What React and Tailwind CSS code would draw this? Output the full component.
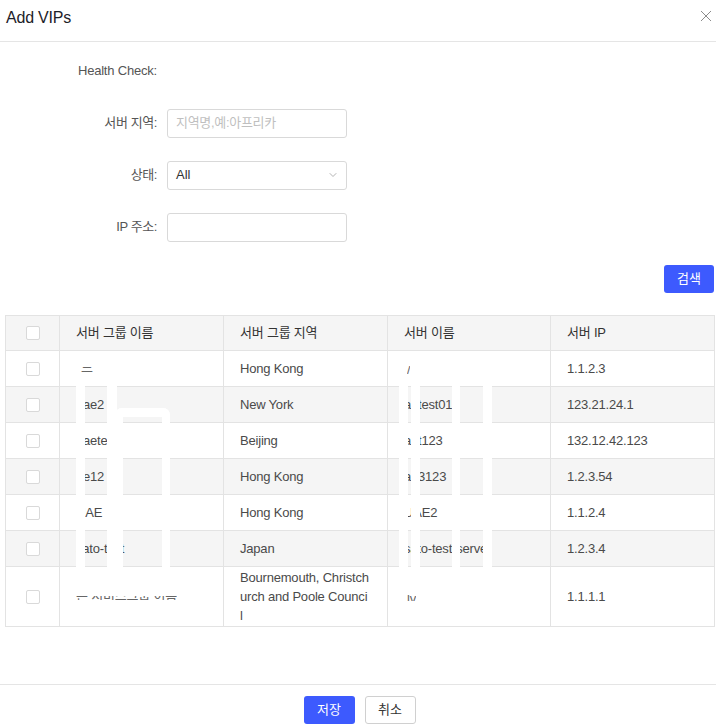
import { ChevronDown } from 'lucide-react';

const rows = [
  { name: null, region: 'Hong Kong', server: null, ip: '1.1.2.3' },
  { name: 'uae2', region: 'New York', server: 'aetest01', ip: '123.21.24.1' },
  { name: 'uaete', region: 'Beijing', server: 'aet123', ip: '132.12.42.123' },
  { name: 'ue12', region: 'Hong Kong', server: 'ae3123', ip: '1.2.3.54' },
  { name: 'UAE', region: 'Hong Kong', server: 'UAE2', ip: '1.1.2.4' },
  { name: 'sato-test', region: 'Japan', server: 'sato-test-server', ip: '1.2.3.4' },
  {
    name: null,
    // wrapped at the character like the cell in the reference
    region: ['Bournemouth, Christch', 'urch and Poole Counci', 'l'],
    server: null,
    ip: '1.1.1.1',
  },
];

// faded fragments, only the bottom strokes of the glyphs show
function Clipped({ text, h = 5, shift = 9 }) {
  return (
    <span className="inline-block overflow-hidden align-middle text-[#666]" style={{ height: h }}>
      <span className="block leading-[19px]" style={{ marginTop: -shift }}>{text}</span>
    </span>
  );
}

function Checkbox() {
  return <div className="mx-auto w-[14px] h-[14px] rounded-[2px] border border-[#d9d9d9] bg-white" />;
}

export default function App() {
  return (
    <div className="h-[727px] w-[716px] bg-white flex flex-col overflow-hidden font-['Liberation_Sans','Noto_Sans_CJK_KR',sans-serif] text-[13px] text-[#333]">
      {/* Header */}
      <div className="h-[42px] shrink-0 flex items-center justify-between pl-[6px] pr-[3px] border-b border-[#e5e5e5]">
        <div className="text-[16px] text-[#1d2129] -mt-[5px] tracking-[-0.2px]">Add VIPs</div>
        <svg width="12" height="12" viewBox="0 0 12 12" className="-mt-[9px] mr-[1px]">
          <path d="M1 1L11 11M11 1L1 11" stroke="#8c8c8c" strokeWidth="1" />
        </svg>
      </div>

      {/* Body */}
      <div className="flex-1 pt-[15px]">
        <div className="flex flex-col gap-[24px] text-[#555]">
          <div className="flex items-center h-[28px]">
            <div className="w-[157px] text-right tracking-[-0.2px]">Health Check:</div>
          </div>
          <div className="flex items-center h-[28px]">
            <div className="w-[157px] text-right tracking-[-0.4px]">서버 지역:</div>
            <div className="ml-[10px] w-[180px] h-[29px] rounded-[3px] border border-[#d9d9d9] flex items-center px-[8px] text-[#bfbfbf] tracking-[-0.3px]">
              지역명,예:아프리카
            </div>
          </div>
          <div className="flex items-center h-[28px]">
            <div className="w-[157px] text-right tracking-[-0.4px]">상태:</div>
            <div className="ml-[10px] w-[180px] h-[29px] rounded-[3px] border border-[#d9d9d9] flex items-center justify-between pl-[8px] pr-[7px] text-[#333]">
              <span>All</span>
              <ChevronDown className="w-[12px] h-[12px] text-[#999]" strokeWidth={1.5} />
            </div>
          </div>
          <div className="flex items-center h-[28px]">
            <div className="w-[157px] text-right tracking-[-0.4px]">IP 주소:</div>
            <div className="ml-[10px] w-[180px] h-[29px] rounded-[3px] border border-[#d9d9d9]" />
          </div>
        </div>

        <div className="flex justify-end pr-[2px] mt-[24px]">
          <button className="w-[50px] h-[28px] rounded-[3px] bg-[#3d5afe] text-white text-[13px]">검색</button>
        </div>

        {/* Table */}
        <div className="relative mt-[22px] ml-[5px] w-[710px]">
          <table className="w-full border-collapse table-fixed border border-[#e3e3e3] tracking-[-0.2px]">
            <colgroup>
              <col className="w-[54px]" />
              <col className="w-[164px]" />
              <col className="w-[164px]" />
              <col className="w-[163px]" />
              <col />
            </colgroup>
            <thead>
              <tr className="bg-[#f5f5f5] h-[35px]">
                <th className="border border-[#e3e3e3] font-normal"><Checkbox /></th>
                <th className="border border-[#e3e3e3] font-normal text-left px-[16px] text-[#333]">서버 그룹 이름</th>
                <th className="border border-[#e3e3e3] font-normal text-left px-[16px] text-[#333]">서버 그룹 지역</th>
                <th className="border border-[#e3e3e3] font-normal text-left px-[16px] text-[#333]">서버 이름</th>
                <th className="border border-[#e3e3e3] font-normal text-left px-[16px] text-[#333]">서버 IP</th>
              </tr>
            </thead>
            <tbody>
              {rows.map((r, i) => (
                <tr key={i} className={`h-[36px] ${i % 2 === 1 ? 'bg-[#f5f5f5]' : 'bg-white'}`}>
                  <td className="border border-[#e3e3e3]"><Checkbox /></td>
                  <td className="border border-[#e3e3e3] px-[16px] py-px leading-[19px] text-[#4a4a4a] whitespace-nowrap overflow-hidden">
                    {r.name ?? (i === 0 ? <span className="pl-[5px]"><Clipped text="느" /></span> : <Clipped text="는 서비스그룹 이름" h={4} shift={10} />)}
                  </td>
                  <td className="border border-[#e3e3e3] px-[16px] py-px leading-[19px] text-[#4a4a4a] whitespace-nowrap">
                    {Array.isArray(r.region)
                      ? r.region.map((line) => <div key={line}>{line}</div>)
                      : r.region}
                  </td>
                  <td className="border border-[#e3e3e3] px-[16px] py-px leading-[19px] text-[#4a4a4a] whitespace-nowrap overflow-hidden">
                    {r.server ?? <span className="pl-[3px]"><Clipped text={i === 0 ? '/' : 'lv'} h={i === 0 ? 8 : 6} shift={6} /></span>}
                  </td>
                  <td className="border border-[#e3e3e3] px-[16px] py-px leading-[19px] text-[#4a4a4a]">{r.ip}</td>
                </tr>
              ))}
            </tbody>
          </table>

          {/* white marks lying over the table */}
          <div className="absolute left-[71px] top-[70px] w-[9px] h-[182px] bg-white" />
          <div className="absolute left-[102px] top-[70px] w-[10px] h-[182px] bg-white" />
          <div className="absolute left-[110px] top-[93px] w-[55px] h-[159px] border-x-[8px] border-t-[9px] border-white rounded-t-[7px]" />
          <div className="absolute left-[394px] top-[71px] w-[9px] h-[181px] bg-white" />
          <div className="absolute left-[406px] top-[71px] w-[9px] h-[181px] bg-white" />
          <div className="absolute left-[447px] top-[71px] w-[8px] h-[181px] bg-white" />
          <div className="absolute left-[478px] top-[71px] w-[9px] h-[181px] bg-white" />
        </div>
      </div>

      {/* Footer */}
      <div className="h-[43px] shrink-0 border-t border-[#e5e5e5] flex justify-center gap-[10px] pt-[11px] pl-[3px]">
        <button className="w-[51px] h-[28px] rounded-[3px] bg-[#3d5afe] text-white text-[13px]">저장</button>
        <button className="w-[51px] h-[28px] rounded-[3px] border border-[#d0d0d0] bg-white text-[#333] text-[13px]">취소</button>
      </div>
    </div>
  );
}
